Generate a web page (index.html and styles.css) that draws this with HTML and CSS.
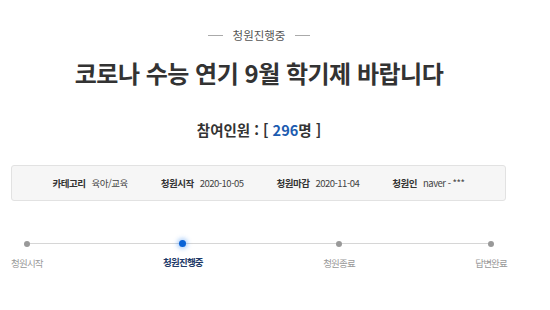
FILE: index.html
```html
<!DOCTYPE html>
<html lang="ko">
<head>
    <meta charset="UTF-8">
    <meta name="viewport" content="width=device-width, initial-scale=1.0">
    <title>청원진행중</title>
    <link rel="stylesheet" href="styles.css">
</head>
<body>
    <div class="petition">
        <div class="status">
            <span class="status-line"></span>
            <span>청원진행중</span>
            <span class="status-line"></span>
        </div>
        <h1 class="title">코로나 수능 연기 9월 학기제 바랍니다</h1>
        <div class="count">참여인원 : [ <span class="count-num">296</span>명 ]</div>

        <div class="info">
            <div class="info-item"><span class="info-label">카테고리</span><span>육아/교육</span></div>
            <div class="info-item"><span class="info-label">청원시작</span><span>2020-10-05</span></div>
            <div class="info-item"><span class="info-label">청원마감</span><span>2020-11-04</span></div>
            <div class="info-item"><span class="info-label">청원인</span><span>naver - ***</span></div>
        </div>

        <div class="steps">
            <div class="step"><span class="dot"></span><span>청원시작</span></div>
            <div class="step active"><span class="dot"></span><span>청원진행중</span></div>
            <div class="step"><span class="dot"></span><span>청원종료</span></div>
            <div class="step"><span class="dot"></span><span>답변완료</span></div>
        </div>
    </div>
</body>
</html>
```
FILE: styles.css
```css
body {
    margin: 0;
    background-color: #fff;
    font-family: "Noto Sans CJK KR", "Noto Sans", sans-serif;
    color: #333;
}
.petition {
    width: 496px;
    margin-left: 11px;
    padding-top: 25px;
}
.status {
    display: flex;
    justify-content: center;
    align-items: center;
    gap: 10px;
    font-size: 11.5px;
    line-height: 20px;
    color: #555;
}
.status-line {
    width: 15px;
    height: 1px;
    background-color: #aaa;
}
.title {
    margin: 12px 0 0;
    font-size: 24px;
    line-height: 32px;
    font-weight: bold;
    text-align: center;
    color: #333;
    letter-spacing: -0.5px;
}
.count {
    margin-top: 28px;
    font-size: 14.5px;
    line-height: 26px;
    font-weight: bold;
    text-align: center;
    color: #333;
}
.count-num {
    color: #1c5bb0;
}
.info {
    display: flex;
    justify-content: center;
    align-items: center;
    gap: 33px;
    margin-top: 22px;
    width: 493px;
    height: 34px;
    background-color: #f6f6f6;
    border: 1px solid #e2e2e2;
    border-radius: 3px;
    font-size: 9.5px;
    letter-spacing: -0.5px;
    color: #444;
}
.info-item {
    display: flex;
    gap: 6px;
}
.info-label {
    font-weight: bold;
    color: #333;
}
.steps {
    position: relative;
    display: flex;
    justify-content: space-between;
    margin-top: 39px;
}
/* 점들을 잇는 선 */
.steps::before {
    content: "";
    position: absolute;
    left: 16px;
    right: 17px;
    top: 3px;
    height: 1px;
    background-color: #d6d6d6;
}
.step {
    position: relative;
    display: flex;
    flex-direction: column;
    align-items: center;
    gap: 8px;
    font-size: 9.5px;
    line-height: 16px;
    letter-spacing: -0.8px;
    color: #999;
}
.dot {
    width: 6px;
    height: 6px;
    margin-top: 1px;
    border-radius: 50%;
    background-color: #999;
}
.step.active {
    color: #1e3a68;
    font-weight: bold;
}
.step.active .dot {
    width: 7px;
    height: 7px;
    margin-top: 0;
    margin-bottom: -1px;
    background-color: #0a63d6;
    box-shadow: 0 0 4px 2px rgba(40, 130, 240, 0.35);
}
```
